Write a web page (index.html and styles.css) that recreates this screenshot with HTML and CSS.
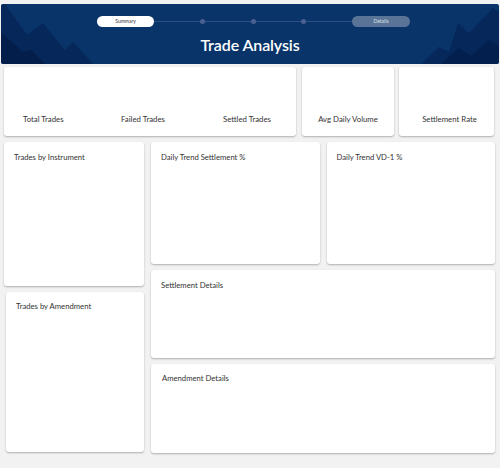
FILE: index.html
```html
<!DOCTYPE html>
<html lang="en">
<head>
    <meta charset="UTF-8">
    <meta name="viewport" content="width=device-width, initial-scale=1.0">
    <title>Trade Analysis</title>
    <link rel="stylesheet" href="styles.css">
</head>
<body>
    <header class="banner">
        <!-- mountain shapes in the corners -->
        <svg class="banner-bg" viewBox="0 0 498 60" preserveAspectRatio="none">
            <polygon points="0,0 4,0 26,31 42,19 64,46 72,38 92,60 0,60" fill="rgba(0,18,60,0.35)"/>
            <polygon points="0,28 22,48 30,46 44,60 0,60" fill="rgba(0,14,50,0.35)"/>
            <polygon points="420,60 438,43 448,48 457,19 468,29 492,4 498,8 498,60" fill="rgba(0,18,60,0.35)"/>
            <polygon points="440,60 458,44 470,52 488,36 498,42 498,60" fill="rgba(0,14,50,0.3)"/>
        </svg>
        <div class="stepper">
            <span class="step step-active">Summary</span>
            <span class="step-line"></span>
            <span class="step-dot"></span>
            <span class="step-line"></span>
            <span class="step-dot"></span>
            <span class="step-line"></span>
            <span class="step-dot"></span>
            <span class="step-line"></span>
            <span class="step step-muted">Details</span>
        </div>
        <h1 class="banner-title">Trade Analysis</h1>
    </header>

    <section class="kpi-row">
        <div class="card kpi-group">
            <div class="kpi">Total Trades</div>
            <div class="kpi">Failed Trades</div>
            <div class="kpi">Settled Trades</div>
        </div>
        <div class="card kpi-single kpi-volume">
            <div class="kpi">Avg Daily Volume</div>
        </div>
        <div class="card kpi-single kpi-rate">
            <div class="kpi">Settlement Rate</div>
        </div>
    </section>

    <main class="dashboard">
        <div class="side-col">
            <div class="card panel panel-instrument">
                <h2>Trades by Instrument</h2>
            </div>
            <div class="card panel panel-amendment">
                <h2>Trades by Amendment</h2>
            </div>
        </div>
        <div class="main-col">
            <div class="trend-row">
                <div class="card panel panel-trend">
                    <h2>Daily Trend Settlement %</h2>
                </div>
                <div class="card panel panel-trend">
                    <h2>Daily Trend VD-1 %</h2>
                </div>
            </div>
            <div class="card panel panel-settlement">
                <h2>Settlement Details</h2>
            </div>
            <div class="card panel panel-amend-details">
                <h2>Amendment Details</h2>
            </div>
        </div>
    </main>
</body>
</html>
```

FILE: styles.css
```css
body {
    margin: 0;
    padding: 0;
    background-color: #f2f2f2;
    font-family: Lato, "Open Sans", sans-serif;
    color: #333;
    width: 500px;
    height: 468px;
    overflow: hidden;
}

.banner {
    position: relative;
    margin: 4px 1px 0;
    height: 60px;
    background-color: #08346a;
    overflow: hidden;
    border-radius: 2px;
}

.banner-bg {
    position: absolute;
    left: 0;
    top: 0;
    width: 100%;
    height: 100%;
}

.stepper {
    position: relative;
    display: flex;
    align-items: center;
    width: 313px;
    margin-left: 96px;
    padding-top: 12px;
}

.step {
    width: 57px;
    height: 11px;
    border-radius: 6px;
    font-size: 5px;
    line-height: 11px;
    text-align: center;
}

.step-active {
    background-color: #ffffff;
    color: #333;
}

.step-muted {
    width: 58px;
    background-color: #5a7497;
    color: #d8e0ea;
}

.step-line {
    flex: 1;
    height: 1px;
    background-color: #2c4f80;
}

.step-dot {
    width: 5px;
    height: 5px;
    border-radius: 50%;
    background-color: #4a6090;
}

.banner-title {
    position: relative;
    margin: 8px 0 0;
    text-align: center;
    color: #ffffff;
    font-size: 16px;
    font-weight: 600;
    letter-spacing: -0.1px;
}

.card {
    background-color: #ffffff;
    border-radius: 3px;
    box-shadow: 0 1px 2px rgba(0, 0, 0, 0.28);
    box-sizing: border-box;
}

.kpi-row {
    display: flex;
    margin: 3px 0 0 4px;
    height: 69px;
}

.kpi-group {
    width: 292px;
    display: flex;
    align-items: flex-end;
    padding: 0 0 12px 19px;
}

.kpi {
    font-size: 7.8px;
}

.kpi-group .kpi:nth-child(1) {
    width: 98px;
}

.kpi-group .kpi:nth-child(2) {
    width: 102px;
}

.kpi-single {
    display: flex;
    align-items: flex-end;
    justify-content: center;
    padding-bottom: 12px;
}

.kpi-volume {
    width: 92px;
    margin-left: 6px;
}

.kpi-rate {
    width: 95px;
    margin-left: 5px;
    padding-left: 6px;
}

.dashboard {
    display: flex;
    margin: 6px 0 0 4px;
}

.side-col {
    width: 140px;
    display: flex;
    flex-direction: column;
    gap: 6px;
}

.main-col {
    width: 344px;
    margin-left: 7px;
    display: flex;
    flex-direction: column;
    gap: 6px;
}

.trend-row {
    display: flex;
    gap: 7px;
}

.panel h2 {
    margin: 0;
    font-size: 7.7px;
    font-weight: 400;
    color: #333;
}

.panel-instrument {
    height: 144px;
    padding: 10px 10px;
}

.panel-amendment {
    height: 160px;
    margin-left: 2px;
    width: 138px;
    padding: 9px 10px;
}

.panel-trend {
    flex: 1;
    height: 122px;
    padding: 10px 10px;
}

.panel-settlement {
    height: 88px;
    padding: 10px 10px;
}

.panel-amend-details {
    height: 89px;
    padding: 9px 11px;
}
```
